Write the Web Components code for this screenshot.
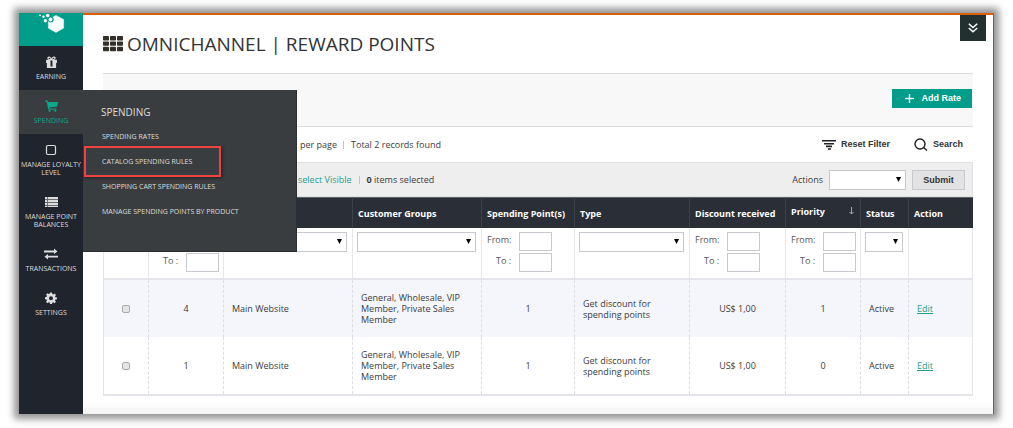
<!DOCTYPE html>
<html lang="en">
<head>
<meta charset="utf-8">
<title>Omnichannel | Reward Points</title>
<style>
body { margin: 0; background: #fff; font-family: "Open Sans", sans-serif; font-size: 9px; line-height: 11px; color: #3c3c3c; }
</style>
</head>
<body>
<app-window>
  <side-nav slot="nav">
    <nav-item label="Earning"><svg slot="icon" viewBox="0 0 24 24" width="13" height="13"><path fill="currentColor" fill-rule="evenodd" d="M2 7h5.2C4.500 6.500 3.500 3.800 5 2c2-2 5-1 7 2.500C14 1 17 0 19 2c1.500 1.800.5 4.500-2.200 5H22v6h-1.500v9h-17v-9H2zM7 3.600C6 4.700 7 5.800 10.400 5.800 9.200 3.400 8 2.800 7 3.600zm10 0c-1-.8-2.200-.2-3.400 2.200C17 5.800 18 4.700 17 3.600zM10.200 8.500v11h3.600v-11z"/></svg></nav-item>
    <nav-item label="Spending" active><svg slot="icon" viewBox="0 0 24 22" width="13" height="12"><path fill="currentColor" d="M0 1h4.800l.6 2.500H24L22.500 12l-15 1.800.4 1.600H21V17.500H6L3.200 3H0z"/><circle cx="8.500" cy="19.800" r="2" fill="currentColor"/><circle cx="19" cy="19.800" r="2" fill="currentColor"/></svg></nav-item>
    <nav-item label="Manage Loyalty Level"><svg slot="icon" viewBox="0 0 12 12" width="12" height="12"><rect x="1.500" y="1.500" width="9" height="9" rx="1.500" fill="none" stroke="currentColor" stroke-width="1.200"/></svg></nav-item>
    <nav-item label="Manage Point Balances"><svg slot="icon" viewBox="0 0 13 12" width="13" height="12"><path fill="currentColor" d="M0 1h2v2H0zM3 1h10v2H3zM0 4h2v2H0zM3 4h10v2H3zM0 7h2v2H0zM3 7h10v2H3zM0 10h2v1H0zM3 10h10v1H3z"/><path fill="currentColor" opacity=".4" d="M0 1h13v10H0z"/></svg></nav-item>
    <nav-item label="Transactions"><svg slot="icon" viewBox="0 0 14 12" width="14" height="12"><path fill="currentColor" d="M0 2.500h10V.5L13.500 3.500 10 6V4.400H0zM14 7.700H4V6L.5 8.700 4 11.500V9.600H14z"/></svg></nav-item>
    <nav-item label="Settings"><svg slot="icon" viewBox="0 0 24 24" width="12" height="12"><path fill="currentColor" fill-rule="evenodd" d="M10 1h4l.6 3.200 1.900.8 2.700-1.900 2.800 2.800-1.900 2.700.8 1.900L24 11v3.500l-3.200.6-.8 1.900 1.900 2.700-2.800 2.800-2.700-1.900-1.800.8L14 24h-4l-.6-2.800-1.900-.8-2.700 1.900L2 19.500l1.900-2.700-.8-1.900L0 14.300v-4l3.200-.6.8-1.900L2.100 5.100l2.800-2.800L7.600 4.200l1.800-.8zM12 8.300a4 4 0 1 0 0 8 4 4 0 0 0 0-8z"/></svg></nav-item>
    <sub-menu slot="flyout" heading="Spending">
      <menu-link>Spending Rates</menu-link>
      <menu-link highlighted>Catalog Spending Rules</menu-link>
      <menu-link>Shopping Cart Spending Rules</menu-link>
      <menu-link>Manage Spending Points by Product</menu-link>
    </sub-menu>
  </side-nav>
  <page-header slot="header">OMNICHANNEL | REWARD POINTS</page-header>
  <add-bar></add-bar>
  <pager-bar></pager-bar>
  <action-bar></action-bar>
  <rates-grid></rates-grid>
</app-window>

<script>
const define = (name, html, setup) => {
  const template = document.createElement('template');
  template.innerHTML = '<style>*{box-sizing:border-box}:host{display:block;box-sizing:border-box}</style>' + html;
  customElements.define(name, class extends HTMLElement {
    constructor() {
      super();
      this.attachShadow({ mode: 'open' }).append(template.content.cloneNode(true));
    }
    connectedCallback() { if (setup) setup(this, this.shadowRoot); }
  });
};

define('app-window', `
<style>
:host { display: grid; grid-template-columns: 64px 1fr; margin: 13px 19px 14px; background: #fff; box-shadow: 0 0 7px 5px rgba(0,0,0,.42); }
.page { display: flex; flex-direction: column; min-width: 0; border-top: 2px solid #d9600a; border-right: 1px solid #666; }
.body { padding: 0 20px; }
footer { height: 12px; margin-top: 6px; background: linear-gradient(#fff, #f3f3f3); }
</style>
<slot name="nav"></slot>
<div class="page"><slot name="header"></slot><main class="body"><slot></slot></main><footer></footer></div>`);

define('side-nav', `
<style>
:host { position: relative; z-index: 2; background: #20242d; color: #ddd; }
.logo { height: 33px; background: #009d8a; display: flex; justify-content: center; }
.logo svg { display: block; margin-left: 4px; }
.flyout { position: absolute; left: 100%; top: 77px; }
</style>
<div class="logo"><svg width="28" height="20" viewBox="0 0 28 20" fill="#fff"><path d="M17 2.400 24.600 6.600v8.500L17 19.400 9.400 15.100V6.600z" stroke="#fff" stroke-width=".5"/><circle cx="11.800" cy="6.500" r="2.900" fill="#009d8a"/><circle cx="1" cy="2.300" r=".9"/><circle cx="4.500" cy="3.700" r="1.200"/><circle cx="8.700" cy="2.600" r="1.800"/><circle cx="6.300" cy="7.800" r="1.700"/><circle cx="11.500" cy="6.500" r="1.900"/></svg></div>
<nav><slot></slot></nav>
<div class="flyout"><slot name="flyout"></slot></div>`);

define('nav-item', `
<style>
a { display: flex; flex-direction: column; align-items: center; gap: 5px; padding: 10px 1px 9px; color: inherit; text-decoration: none; text-transform: uppercase; text-align: center; font-size: 7px; line-height: 8px; }
.icon { height: 12px; display: flex; align-items: center; }
:host([active]) { background: #3a3d3f; color: #0ba890; }
</style>
<a href="#"><span class="icon"><slot name="icon"></slot></span><span class="text"></span></a>`,
(el, root) => { root.querySelector('.text').textContent = el.getAttribute('label'); });

define('sub-menu', `
<style>
:host { width: 214px; height: 162px; background: #3a3d3f; color: #ddd; border-right: 1px solid #2c2f31; border-bottom: 1px solid #2c2f31; }
h2 { margin: 0; padding: 15px 18px 5px; font-size: 10px; line-height: 14px; font-weight: 400; text-transform: uppercase; }
</style>
<h2></h2><slot></slot>`,
(el, root) => { root.querySelector('h2').textContent = el.getAttribute('heading'); });

define('menu-link', `
<style>
:host { display: flex; height: 25px; align-items: center; }
:host([highlighted]) { position: relative; }
:host([highlighted])::after { content: ""; position: absolute; inset: -3px 75px -3px 1px; border: 2px solid #ef4343; box-shadow: 1px 1px 3px rgba(0,0,0,.5); pointer-events: none; }
a { padding: 0 19px; color: inherit; text-decoration: none; text-transform: uppercase; font-size: 7px; line-height: 10px; white-space: nowrap; }
</style>
<a href="#"><slot></slot></a>`);

define('page-header', `
<style>
:host { display: flex; justify-content: space-between; align-items: flex-start; height: 58px; padding: 0 7px 0 20px; }
h1 { display: flex; align-items: center; gap: 4px; margin: 15px 0 0; font-size: 19px; line-height: 28px; font-weight: 400; color: #333; }
button { width: 26px; height: 26px; border: 0; padding: 0; background: #22302f; display: grid; place-items: center; }
</style>
<h1><svg width="20" height="16" viewBox="0 0 20 16" fill="#33302a"><rect width="6" height="4.400" rx=".7"/><rect x="7" width="6" height="4.400" rx=".7"/><rect x="14" width="6" height="4.400" rx=".7"/><rect y="5.400" width="6" height="4.400" rx=".7"/><rect x="7" y="5.400" width="6" height="4.400" rx=".7"/><rect x="14" y="5.400" width="6" height="4.400" rx=".7"/><rect y="10.800" width="6" height="4.400" rx=".7"/><rect x="7" y="10.800" width="6" height="4.400" rx=".7"/><rect x="14" y="10.800" width="6" height="4.400" rx=".7"/></svg><span><slot></slot></span></h1>
<button aria-label="Expand"><svg width="10" height="10" viewBox="0 0 10 10" fill="none" stroke="#fff" stroke-width="1.500"><path d="M.8.8 5 4.500 9.200.8M.8 5 5 8.700 9.200 5"/></svg></button>`);

define('add-bar', `
<style>
:host { display: flex; justify-content: flex-end; align-items: center; height: 54px; padding: 0 1px 3px; background: #f8f8f8; border-top: 1px solid #dddde0; border-bottom: 1px solid #dddde0; }
button { display: flex; align-items: center; gap: 7px; height: 19px; padding: 0 11px 0 13px; border: 0; background: #009d8a; color: #fff; font: bold 9px/11px "Liberation Sans", Arial, sans-serif; }
</style>
<button><svg width="9" height="9" viewBox="0 0 9 9" fill="#fff"><path d="M4 0h1v4h4v1H5v4H4V5H0V4h4z" stroke="#fff" stroke-width=".4"/></svg>Add Rate</button>`);

define('pager-bar', `
<style>
:host { display: flex; justify-content: space-between; align-items: center; height: 35px; padding: 0 10px 0 197px; }
.count, .tools { display: flex; align-items: center; }
.count { gap: 6px; }
i { width: 1px; height: 8px; background: #ccc0b0; }
.count i { margin-right: 1px; }
.tools { gap: 24px; }
button { display: flex; align-items: center; gap: 5px; padding: 0; border: 0; background: none; color: #333; font: bold 9px/11px "Liberation Sans", Arial, sans-serif; }
</style>
<div class="count"><span>per page</span><i></i><span>Total 2 records found</span></div>
<div class="tools">
<button><svg width="14" height="10" viewBox="0 0 14 10" fill="#222"><path d="M0 0h14v1.600H0zM2 3h10v1.600H2zM4 5.600h6v1.600H4zM6 8.200h3v1.600H6z"/></svg>Reset Filter</button>
<button><svg width="14" height="13" viewBox="0 0 14 13" fill="none" stroke="#222" stroke-width="1.400"><circle cx="6" cy="6" r="5"/><path d="m9.500 9.500 3.500 3"/></svg>Search</button>
</div>`);

define('drop-down', `
<style>
:host { position: relative; }
select { display: block; width: 100%; height: 20px; padding: 0 14px 0 4px; border: 1px solid #c8c8d0; border-radius: 0; background: #fff; appearance: none; font: inherit; }
svg { position: absolute; right: 5px; top: 7px; pointer-events: none; }
</style>
<select><option></option></select><svg width="5" height="5" viewBox="0 0 5 5"><path d="M0 0h5L2.500 5z" fill="#000"/></svg>`,
(el, root) => { root.querySelector('select').setAttribute('aria-label', el.getAttribute('label')); });

define('action-bar', `
<style>
:host { display: flex; justify-content: space-between; align-items: center; height: 35px; padding: 0 7px 0 194px; background: #eee; border: 1px solid #e0e0e3; }
.left, .right { display: flex; align-items: center; }
.left { gap: 7px; }
.right { gap: 6px; }
a { color: #23a08c; text-decoration: none; }
i { width: 1px; height: 8px; background: #c4c4c4; }
drop-down { width: 77px; }
button { width: 53px; height: 20px; padding: 1px 0 0; border: 1px solid #c8c8d0; background: #e2e2e2; color: #333; font: bold 9px/11px "Liberation Sans", Arial, sans-serif; }
</style>
<div class="left"><a href="#">select Visible</a><i></i><span><b>0</b> items selected</span></div>
<div class="right"><span>Actions</span><drop-down label="Actions"></drop-down><button>Submit</button></div>`);

define('range-filter', `
<style>
:host { display: grid; grid-template-columns: 24px 33px; column-gap: 8px; row-gap: 2px; padding-left: 5px; color: #555; }
:host([single]) .from { visibility: hidden; }
label { text-align: right; padding-top: 2px; white-space: nowrap; }
input { display: block; width: 100%; height: 19px; border: 1px solid #c8c8d0; padding: 0 2px; background: #fff; font: inherit; }
</style>
<label class="from" for="from">From:</label><input class="from" id="from"><label for="to">To :</label><input id="to">`);

define('rates-grid', `
<style>
table { width: 100%; table-layout: fixed; border-collapse: separate; border-spacing: 0; border-bottom: 2px solid #e4e5ea; }
th, td { padding: 0; text-align: left; }
th { height: 31px; padding: 0 5px; background: #2a2e37; color: #fff; font-weight: 700; border-left: 1px solid #3c414b; border-top: 1px solid #5c6568; white-space: nowrap; }
th:first-child { border-left-color: #2a2e37; }
.sort { display: flex; justify-content: space-between; align-items: center; padding: 0 1px 4px 0; }
.filters td { height: 52px; padding-top: 4px; vertical-align: top; border-left: 1px solid #e6e6ea; border-bottom: 2px solid #e4e5ea; }
.filters drop-down { margin: 0 5px 0 4px; }
tbody td { height: 57px; padding: 0 8px; border-left: 1px dashed #dcdce2; }
tr > td:first-child { border-left: 1px solid #e4e5ea; }
tr > td:last-child { border-right: 1px solid #e4e5ea; }
tbody tr:nth-child(odd) { background: #f4f6fb; }
td.mid { text-align: center; }
tbody td.groups { padding-right: 0; }
input { display: block; margin: 0 auto; appearance: none; width: 8px; height: 8px; border: 1px solid #aaa; border-radius: 2px; background: #e4e4e4; }
a { color: #23a08c; }
</style>
<table>
<colgroup><col style="width:45px"><col style="width:75px"><col><col><col style="width:93px"><col style="width:115px"><col style="width:96px"><col style="width:75px"><col style="width:48px"><col style="width:65px"></colgroup>
<thead>
<tr><th></th><th></th><th></th><th>Customer Groups</th><th>Spending Point(s)</th><th>Type</th><th>Discount received</th><th><span class="sort">Priority<svg width="5" height="8" viewBox="0 0 5 8" fill="none" stroke="#a4a8ae"><path d="M2.500 0v7M.5 5l2 2 2-2"/></svg></span></th><th>Status</th><th>Action</th></tr>
<tr class="filters"><td></td><td><range-filter single></range-filter></td><td><drop-down label="Website"></drop-down></td><td><drop-down label="Customer Groups"></drop-down></td><td><range-filter></range-filter></td><td><drop-down label="Type"></drop-down></td><td><range-filter></range-filter></td><td><range-filter></range-filter></td><td><drop-down label="Status"></drop-down></td><td></td></tr>
</thead>
<tbody></tbody>
</table>`,
(el, root) => {
  const rates = [{ id: 4, priority: 1 }, { id: 1, priority: 0 }];
  root.querySelector('tbody').innerHTML = rates.map(r => `
    <tr><td><input type="checkbox" aria-label="Select ${r.id}"></td><td class="mid">${r.id}</td><td>Main Website</td>
    <td class="groups">General, Wholesale, VIP Member, Private Sales Member</td><td class="mid">1</td>
    <td>Get discount for spending points</td><td class="mid">US$ 1,00</td><td class="mid">${r.priority}</td><td>Active</td><td><a href="#">Edit</a></td></tr>`).join('');
});
</script>
</body>
</html>
